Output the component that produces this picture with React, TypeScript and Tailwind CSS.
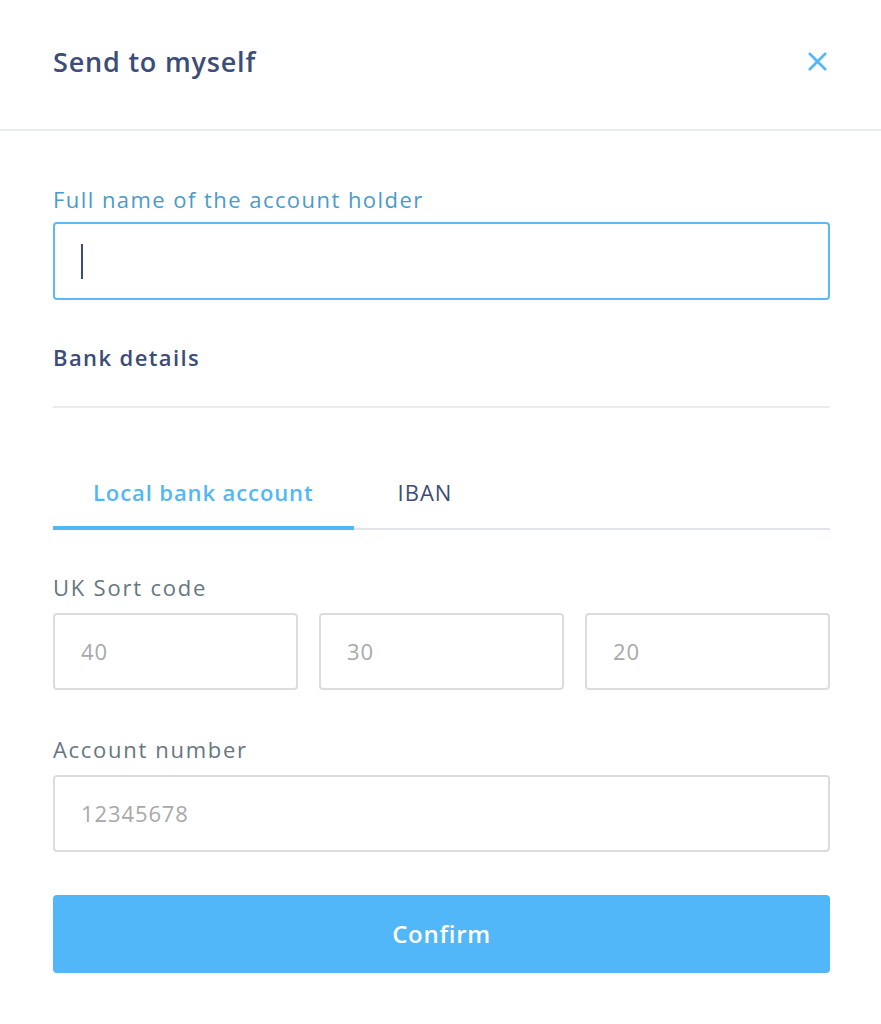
import { X } from "lucide-react";

function Field({ placeholder }: { placeholder: string }) {
  return (
    <div className="flex-1 h-[77px] border-2 border-[#dcdcdc] rounded-[4px] flex items-center px-[26px] text-[22px] tracking-[0.9px] text-[#a9a9a9]">
      {placeholder}
    </div>
  );
}

export default function App() {
  return (
    <main className="w-[881px] min-h-[1024px] bg-white font-['Open_Sans',sans-serif]">
      {/* HEADER */}
      <div className="h-[131px] pl-[53px] pr-[51px] flex items-center justify-between border-b-2 border-[#e8ebef] pb-[4px]">
        <h1 className="text-[27px] font-semibold tracking-[0.8px] text-[#3b4d78]">Send to myself</h1>
        <X className="text-[#52b7f5] w-[31px] h-[31px] mr-[-3px] mt-[-2px]" strokeWidth={2} />
      </div>

      {/* FORM */}
      <div className="pl-[53px] pr-[51px] pt-[54px] pb-[52px]">
        <label className="block h-[28px] leading-[28px] text-[22px] text-[#4a9bcb] tracking-[1.45px]">
          Full name of the account holder
        </label>
        <div className="mt-[9px] h-[78px] border-2 border-[#5cb9f2] rounded-[4px] flex items-center px-[26px]">
          <div className="w-[2px] h-[35px] bg-[#3b4d78]"></div>
        </div>

        <h2 className="mt-[43px] h-[28px] leading-[28px] text-[22px] font-semibold tracking-[1.4px] text-[#3b4d78]">
          Bank details
        </h2>
        <div className="mt-[35px] border-t-2 border-[#e8ebef]"></div>

        {/* TABS */}
        <div className="mt-[70px] flex border-b-2 border-[#e1e4e8]">
          <div className="px-[40px] pb-[20px] h-[52px] leading-[28px] text-[22px] font-semibold tracking-[0.9px] text-[#52b7f5] border-b-4 border-[#52b7f5] -mb-[3px]">
            Local bank account
          </div>
          <div className="px-[44px] h-[50px] leading-[28px] text-[22px] tracking-[1px] text-[#3b4d78]">IBAN</div>
        </div>

        <label className="block mt-[43px] h-[28px] leading-[28px] text-[22px] text-[#67767f] tracking-[1.8px]">
          UK Sort code
        </label>
        <div className="mt-[12px] flex gap-[21px]">
          <Field placeholder="40" />
          <Field placeholder="30" />
          <Field placeholder="20" />
        </div>

        <label className="block mt-[45px] h-[28px] leading-[28px] text-[22px] text-[#67767f] tracking-[1.7px]">
          Account number
        </label>
        <div className="mt-[12px] flex">
          <Field placeholder="12345678" />
        </div>

        <button className="mt-[43px] w-full h-[78px] rounded-[4px] bg-[#52b7f8] text-white text-[24px] font-semibold tracking-[0.7px]">
          Confirm
        </button>
      </div>
    </main>
  );
}
